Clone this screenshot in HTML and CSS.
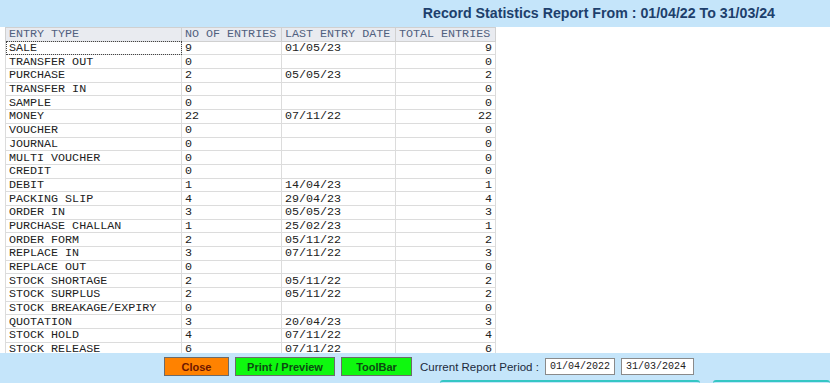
FILE: index.html
```html
<!DOCTYPE html>
<html lang="en">
<head>
    <meta charset="UTF-8">
    <title>Record Statistics</title>
    <link rel="stylesheet" href="styles.css">
</head>
<body>
<div class="page">
    <div class="topbar"><h1>Record Statistics Report From : 01/04/22 To 31/03/24</h1></div>
    <div class="content">
        <table class="stats">
            <thead>
                <tr><th class="c1">ENTRY TYPE</th><th class="c2">NO OF ENTRIES</th><th class="c3">LAST ENTRY DATE</th><th class="c4">TOTAL ENTRIES</th></tr>
            </thead>
            <tbody>
                <tr><td class="focus">SALE</td><td>9</td><td>01/05/23</td><td class="num">9</td></tr>
                <tr><td>TRANSFER OUT</td><td>0</td><td></td><td class="num">0</td></tr>
                <tr><td>PURCHASE</td><td>2</td><td>05/05/23</td><td class="num">2</td></tr>
                <tr><td>TRANSFER IN</td><td>0</td><td></td><td class="num">0</td></tr>
                <tr><td>SAMPLE</td><td>0</td><td></td><td class="num">0</td></tr>
                <tr><td>MONEY</td><td>22</td><td>07/11/22</td><td class="num">22</td></tr>
                <tr><td>VOUCHER</td><td>0</td><td></td><td class="num">0</td></tr>
                <tr><td>JOURNAL</td><td>0</td><td></td><td class="num">0</td></tr>
                <tr><td>MULTI VOUCHER</td><td>0</td><td></td><td class="num">0</td></tr>
                <tr><td>CREDIT</td><td>0</td><td></td><td class="num">0</td></tr>
                <tr><td>DEBIT</td><td>1</td><td>14/04/23</td><td class="num">1</td></tr>
                <tr><td>PACKING SLIP</td><td>4</td><td>29/04/23</td><td class="num">4</td></tr>
                <tr><td>ORDER IN</td><td>3</td><td>05/05/23</td><td class="num">3</td></tr>
                <tr><td>PURCHASE CHALLAN</td><td>1</td><td>25/02/23</td><td class="num">1</td></tr>
                <tr><td>ORDER FORM</td><td>2</td><td>05/11/22</td><td class="num">2</td></tr>
                <tr><td>REPLACE IN</td><td>3</td><td>07/11/22</td><td class="num">3</td></tr>
                <tr><td>REPLACE OUT</td><td>0</td><td></td><td class="num">0</td></tr>
                <tr><td>STOCK SHORTAGE</td><td>2</td><td>05/11/22</td><td class="num">2</td></tr>
                <tr><td>STOCK SURPLUS</td><td>2</td><td>05/11/22</td><td class="num">2</td></tr>
                <tr><td>STOCK BREAKAGE/EXPIRY</td><td>0</td><td></td><td class="num">0</td></tr>
                <tr><td>QUOTATION</td><td>3</td><td>20/04/23</td><td class="num">3</td></tr>
                <tr><td>STOCK HOLD</td><td>4</td><td>07/11/22</td><td class="num">4</td></tr>
                <tr><td>STOCK RELEASE</td><td>6</td><td>07/11/22</td><td class="num">6</td></tr>
            </tbody>
        </table>
    </div>
    <div class="footer">
        <div class="actions">
            <button class="btn close">Close</button>
            <button class="btn print">Print / Preview</button>
            <button class="btn toolbar">ToolBar</button>
            <span class="period">Current Report Period :</span>
            <input class="date" value="01/04/2022" readonly>
            <input class="date" value="31/03/2024" readonly>
        </div>
        <div class="tabs"><span class="tab t1"></span><span class="tab t2"></span></div>
    </div>
</div>
</body>
</html>
```

FILE: styles.css
```css
*, *:before, *:after {box-sizing: border-box;}
* {margin:0;padding:0;}
html, body {background-color: #c5e5fa;font-family: 'Liberation Sans', Arial, sans-serif;}
.page {display: flex;flex-direction: column;width: 830px;height: 383px;overflow: hidden;}
.topbar {height: 27px;display: flex;align-items: center;justify-content: flex-end;padding-right: 55px;padding-bottom: 2px;background-color: #c5e5fa;}
.topbar h1 {font-size: 14.2px;font-weight: bold;color: #1d3f6c;}
.content {flex: 1;overflow: hidden;background-color: #fff;padding-left: 5px;}
.stats {border-collapse: collapse;table-layout: fixed;width: 490px;font-family: 'Liberation Mono', 'Courier New', monospace;font-size: 11.7px;color: #222;}
.stats th, .stats td {height: 13.7px;padding: 0 3px;border: 1px solid #dcdcdc;text-align: left;font-weight: normal;white-space: nowrap;line-height: 12px;}
.stats th {background-color: #e9ebf0;color: #50607e;border-color: #d0d0d0;}
.c1 {width: 176px;}
.c2 {width: 100px;}
.c3 {width: 114px;}
.c4 {width: 100px;}
.stats td.num {text-align: right;}
.stats td.focus {outline: 1px dotted #444;outline-offset: -1px;}
.footer {height: 30px;display: flex;flex-direction: column;background-color: #c5e5fa;}
.actions {flex: 1;display: flex;align-items: center;padding-left: 164px;gap: 6px;}
.btn {height: 19px;border: 1px solid #6b6b6b;font-family: 'Liberation Sans', Arial, sans-serif;font-size: 11px;font-weight: bold;}
.close {width: 65px;background-color: #ff8200;color: #6e1600;}
.print {width: 100px;background-color: #0ff80f;color: #0b4a12;}
.toolbar {width: 71px;background-color: #0ff80f;color: #0b4a12;}
.period {font-size: 11.5px;color: #1c2a3c;margin-left: 2px;}
.date {width: 70px;height: 17px;border: 1px solid #8a8a8a;background: #fff;font-family: 'Liberation Mono', 'Courier New', monospace;font-size: 10px;color: #222;padding-left: 4px;outline: none;}
.date + .date {width: 73px;}
.tabs {height: 3px;display: flex;gap: 13px;padding-left: 440px;}
.tab {height: 3px;border-top: 2px solid #35c6c4;border-radius: 4px 4px 0 0;}
.t1 {width: 260px;}
.t2 {flex: 1;}
```
